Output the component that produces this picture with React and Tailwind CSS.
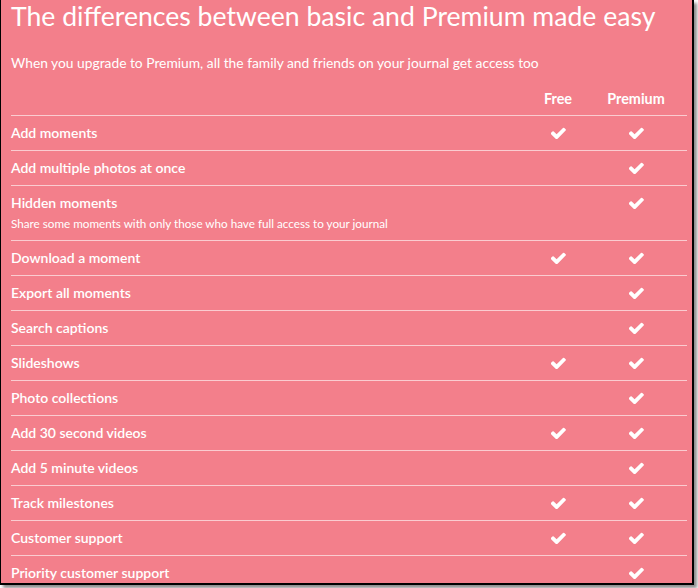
const features = [
  { name: "Add moments", free: true, premium: true },
  { name: "Add multiple photos at once", free: false, premium: true },
  {
    name: "Hidden moments",
    note: "Share some moments with only those who have full access to your journal",
    free: false,
    premium: true,
  },
  { name: "Download a moment", free: true, premium: true },
  { name: "Export all moments", free: false, premium: true },
  { name: "Search captions", free: false, premium: true },
  { name: "Slideshows", free: true, premium: true },
  { name: "Photo collections", free: false, premium: true },
  { name: "Add 30 second videos", free: true, premium: true },
  { name: "Add 5 minute videos", free: false, premium: true },
  { name: "Track milestones", free: true, premium: true },
  { name: "Customer support", free: true, premium: true },
  { name: "Priority customer support", free: false, premium: true },
];

// chunky check, like the old font-awesome glyph
function Tick({ on }) {
  return (
    <div className="w-[78px] flex justify-center h-[20px] items-center">
      {on && (
        <svg width="15" height="12" viewBox="140 320 1540 1120" fill="white">
          <path d="M1671 566q0 40-28 68l-724 724-136 136q-28 28-68 28t-68-28l-136-136-362-362q-28-28-28-68t28-68l136-136q28-28 68-28t68 28l294 295 656-657q28-28 68-28t68 28l136 136q28 28 28 68z" />
        </svg>
      )}
    </div>
  );
}

export default function App() {
  return (
    <div className="w-[698px] h-[588px] bg-white">
      <div className="w-[694px] h-[585px] border-l border-r-2 border-b-2 border-black bg-[#f37f8b] overflow-hidden shadow-[3px_3px_3px_rgba(0,0,0,0.45)] font-['Lato',sans-serif] text-white pl-[10px] pr-[5px]">
        {/* HEADER */}
        <h1 className="text-[26.6px] leading-[32px] font-normal whitespace-nowrap">
          The differences between basic and Premium made easy
        </h1>
        <p className="mt-[21px] text-[13.8px] leading-[20px]">
          When you upgrade to Premium, all the family and friends on your
          journal get access too
        </p>

        {/* COLUMN TITLES */}
        <div className="flex mt-[16px] pb-[6px] text-[14.4px] leading-[20px] font-bold">
          <div className="flex-1"></div>
          <div className="w-[78px] text-center">Free</div>
          <div className="w-[78px] text-center">Premium</div>
          <div className="w-[12px]"></div>
        </div>

        {/* ROWS */}
        {features.map((f, i) => (
          <div
            key={i}
            className="flex border-t border-white/60 py-[7px] text-[14px] leading-[20px]"
          >
            <div className="flex-1">
              <div className="font-semibold">{f.name}</div>
              {f.note && (
                <div className="text-[11.7px] leading-[20px]">{f.note}</div>
              )}
            </div>
            <Tick on={f.free} />
            <Tick on={f.premium} />
            <div className="w-[12px]"></div>
          </div>
        ))}
      </div>
    </div>
  );
}
